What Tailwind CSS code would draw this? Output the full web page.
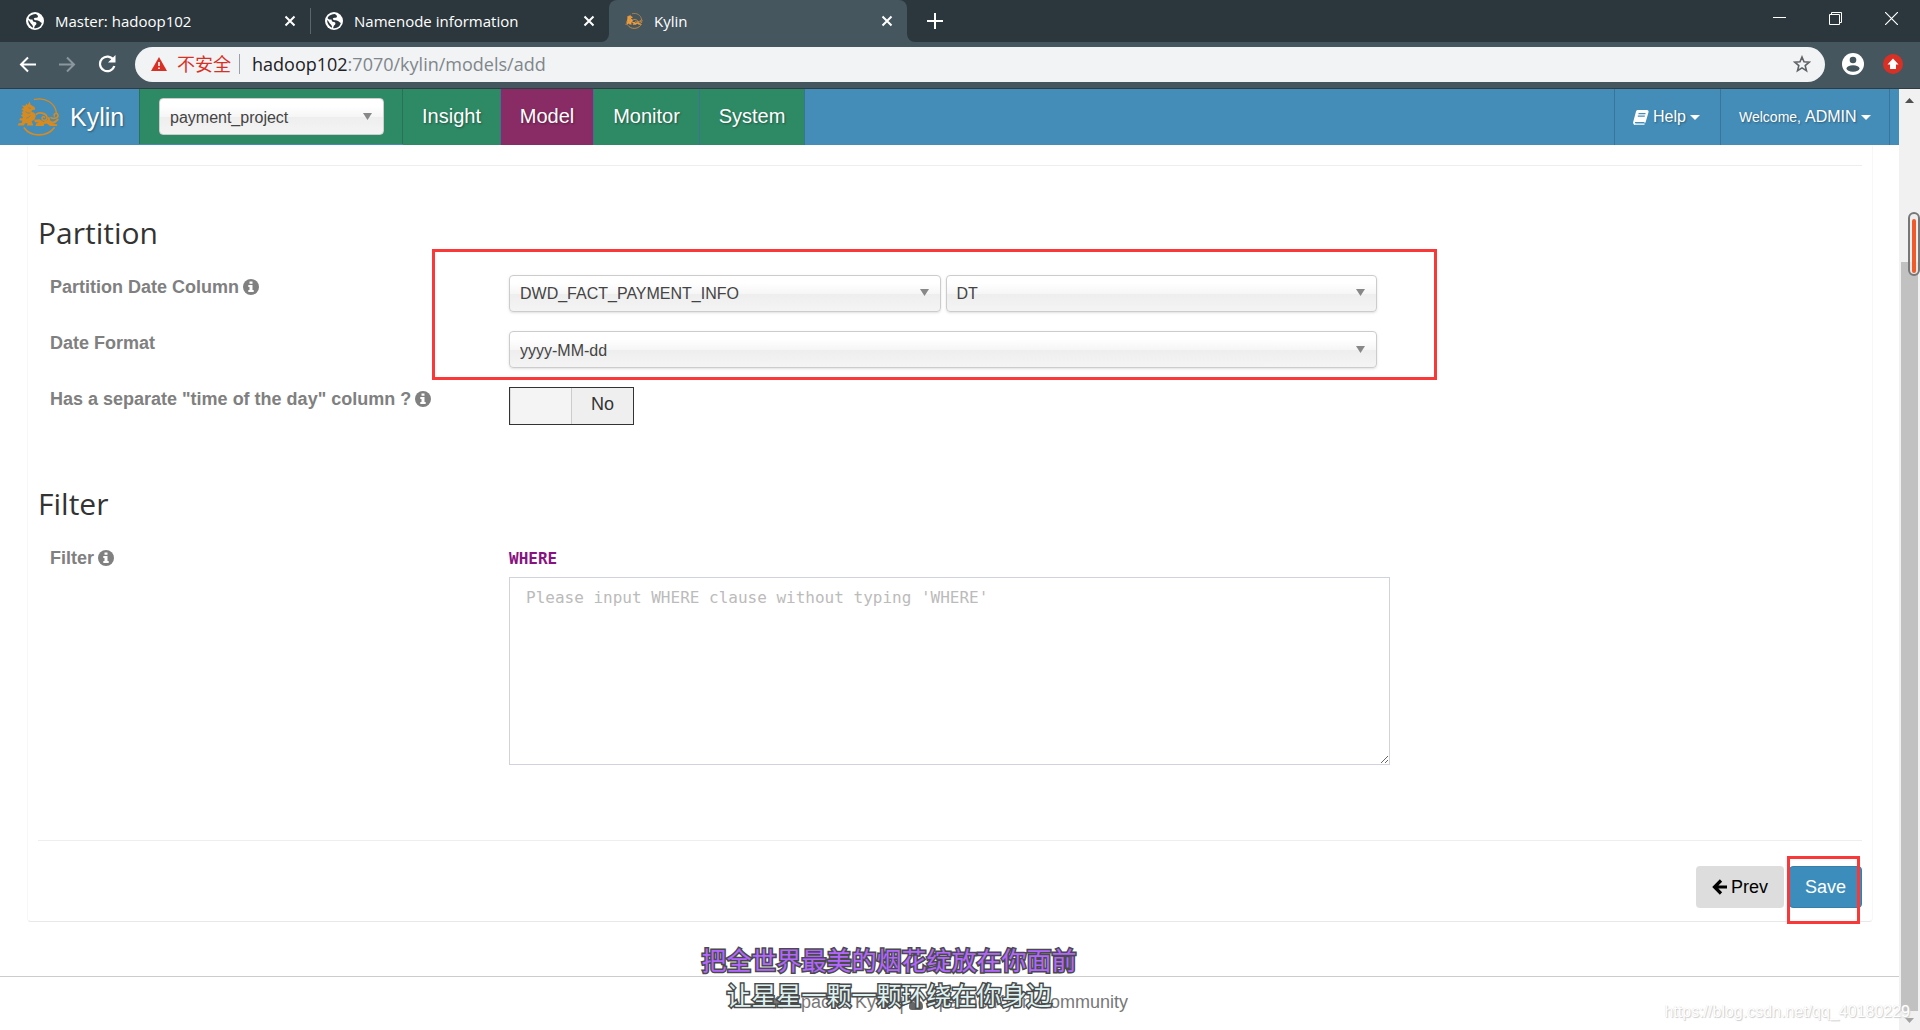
<!DOCTYPE html>
<html lang="en">
<head>
<meta charset="utf-8">
<title>Kylin</title>
<script src="https://cdn.jsdelivr.net/npm/@tailwindcss/browser@4"></script>
</head>
<body class="flex min-h-screen flex-col bg-white font-['Liberation_Sans',sans-serif] text-[#333]">
<svg class="hidden" aria-hidden="true">
  <symbol id="globe" viewBox="0 0 18 18"><circle cx="9" cy="9" r="9" fill="#fff"/><path fill="#2c373d" d="M10 2c-3 0-6 1-7.500 4 1 1.600 2.500 1.700 4 1.500.2 1.700.8 2.500 2.500 2.500 1.200 0 1.700 1 1.300 2.200-.4 1-1.500 1-1.700 2.300-.1.900-.3 1.200-.8 1.500 4.200.9 7.200-1.600 8-5-1.200-.3-1.700-1.300-2.800-1.900-1.600-.8-3.300-.6-4.600-1.300-.8-.5-.7-1.500.1-1.800 1.300-.4 2.800.2 3.400-1 .5-1.200-.8-2.200-1.900-3z"/><path fill="#2c373d" d="M2 8c.2 3.800 2.300 6.500 5 7.700.3-1.700-.6-2.600-1.700-3.800C4.200 10.700 3.500 9 2 8z"/></symbol>
  <symbol id="close" viewBox="0 0 12 12"><path d="M1.500 1.500l9 9M10.500 1.500l-9 9" stroke="#fff" stroke-width="2" fill="none"/></symbol>
  <symbol id="kylin" viewBox="50 80 130 120">
    <g fill="none" stroke="currentColor" stroke-linecap="round">
      <path d="M103 87C135 79 165 98 169 126" stroke-width="4"/>
      <path d="M72 173C92 201 140 201 162 173" stroke-width="5"/>
      <path d="M153 142C160 146 176 144 174 134C171 126 160 129 163 137" stroke-width="5"/>
      <path d="M146 143C146 160 164 160 173 148" stroke-width="6"/>
      <path d="M108 132C116 124 136 128 140 138C144 150 130 154 126 146C124 140 130 137 133 141" stroke-width="5"/>
    </g>
    <path fill="currentColor" d="M88 93L91 103L103 110L105 118L97 119L93 123L103 128L107 137L103 148L94 153L97 160L99 166H80L82 159L76 158L70 166H52L55 159L64 158L66 151L57 150L59 144L68 144L66 138L61 136L68 131L63 125L70 122L63 116L71 113L64 105L75 106L79 99L82 104Z"/>
    <path fill="currentColor" d="M102 148L118 147L130 154L144 148L154 157L161 160L172 163L171 167H150L140 160L132 161L131 167H106L108 160L116 157L104 156Z"/>
    <path stroke="#448db8" stroke-width="2" fill="none" d="M84 112l8 2M76 124q6 6 14 4M78 144q8-2 12-8"/>
  </symbol>
  <symbol id="info" viewBox="0 0 16 16"><circle cx="8" cy="8" r="8" fill="#808080"/><path fill="#fff" d="M6.500 2.500h3v2.300h-3zM5.300 6h4.200v5h1.200v2H5.300v-2h1.200V8H5.300z"/></symbol>
  <symbol id="tri" viewBox="0 0 9 7"><path fill="#888" d="M0 0h9L4.500 7z"/></symbol>
</svg>

<!-- Browser tabs -->
<header class="shrink-0 bg-[#2c373d] font-['Open_Sans','Noto_Sans_CJK_SC',sans-serif] text-white">
  <div class="flex h-[42px] items-stretch">
    <div class="flex w-[310px] items-center pr-[14px] pl-[26px] text-[15px]"><svg class="mr-[11px] size-[18px]"><use href="#globe"/></svg><span class="flex-1">Master: hadoop102</span><button aria-label="Close tab"><svg class="size-3"><use href="#close"/></svg></button></div>
    <div class="my-2 w-px bg-[#5b666c]"></div>
    <div class="flex w-[298px] items-center pr-[14px] pl-[14px] text-[15px]"><svg class="mr-[11px] size-[18px]"><use href="#globe"/></svg><span class="flex-1 whitespace-nowrap">Namenode information</span><button aria-label="Close tab"><svg class="size-3"><use href="#close"/></svg></button></div>
    <div class="relative flex w-[298px] items-center rounded-t-lg bg-[#45565f] pr-[14px] pl-4 text-[15px]">
      <svg class="absolute bottom-0 -left-2 size-2" viewBox="0 0 8 8"><path fill="#45565f" d="M8 0v8H0a8 8 0 0 0 8-8z"/></svg>
      <svg class="absolute -right-2 bottom-0 size-2" viewBox="0 0 8 8"><path fill="#45565f" d="M0 0v8h8a8 8 0 0 1-8-8z"/></svg>
      <svg class="mr-[11px] size-[18px] text-[#f09c3a]"><use href="#kylin"/></svg><span class="flex-1">Kylin</span><button aria-label="Close tab"><svg class="size-3"><use href="#close"/></svg></button></div>
    <button aria-label="New tab" class="ml-5 self-center"><svg class="size-4" viewBox="0 0 16 16"><path d="M8 0v16M0 8h16" stroke="#fff" stroke-width="2"/></svg></button>
    <div class="ml-auto flex items-start gap-[43px] pt-3 pr-[22px]">
      <button aria-label="Minimize"><svg class="size-[13px]" viewBox="0 0 13 13"><path d="M0 5.500h13" stroke="#fff"/></svg></button>
      <button aria-label="Restore"><svg class="size-[13px]" viewBox="0 0 13 13"><path d="M.5 2.500h10v10H.5zM2.500 2.500v-2h10v10h-2" fill="none" stroke="#fff"/></svg></button>
      <button aria-label="Close window"><svg class="size-[13px]" viewBox="0 0 13 13"><path d="M0 0l13 13M13 0L0 13" stroke="#fff" stroke-width="1.200"/></svg></button>
    </div>
  </div>
  <!-- Address bar -->
  <div class="flex h-[47px] items-center border-b border-[#303c42] bg-[#45565f] pr-[17px] pb-[2px] pl-[19px]">
    <button aria-label="Back"><svg class="size-[17px]" viewBox="0 0 17 17"><path d="M17 8.500H2M9 1.500l-7 7 7 7" fill="none" stroke="#fff" stroke-width="2"/></svg></button>
    <button aria-label="Forward" class="ml-[23px]"><svg class="size-[17px]" viewBox="0 0 17 17"><path d="M0 8.500h15M8 1.500l7 7-7 7" fill="none" stroke="#8b979d" stroke-width="2"/></svg></button>
    <button aria-label="Reload" class="ml-[22px]"><svg class="size-[18px]" viewBox="0 0 18 18"><path d="M15.500 5A7.300 7.300 0 1 0 16.300 11" fill="none" stroke="#fff" stroke-width="2.200"/><path d="M17.500 0v7.500H10z" fill="#fff"/></svg></button>
    <div class="ml-[19px] flex h-[35px] flex-1 items-center rounded-full bg-[#f1f3f4] px-4 text-lg">
      <svg class="h-[14px] w-4" viewBox="0 0 16 14"><path fill="#d93025" d="M8 0l8 14H0z"/><path stroke="#fff" stroke-width="1.600" d="M8 5v4M8 10.500v1.600"/></svg>
      <span class="ml-[10px] text-[#d93025]">不安全</span>
      <span class="mx-2 h-5 w-px bg-[#9aa0a6]"></span>
      <a href="#" aria-label="Address" class="ml-1 text-[#202124]">hadoop102<span class="text-[#80868b]">:7070/kylin/models/add</span></a>
      <button aria-label="Bookmark" class="ml-auto"><svg class="-mr-[2px] size-[18px]" viewBox="0 0 18 18"><path d="M9 2l2 4.800 5.200.4-4 3.400 1.300 5.100L9 12.900l-4.500 2.800 1.300-5.100-4-3.400 5.200-.4z" fill="none" stroke="#5f6368" stroke-width="1.600"/></svg></button>
    </div>
    <button aria-label="Profile" class="ml-[17px]"><svg class="size-[22px]" viewBox="0 0 22 22"><circle cx="11" cy="11" r="11" fill="#fff"/><circle cx="11" cy="7" r="3.300" fill="#45565f"/><ellipse cx="11" cy="15.500" rx="6.500" ry="3.200" fill="#45565f"/></svg></button>
    <button aria-label="Update browser" class="ml-[19px]"><svg class="size-5" viewBox="0 0 20 20"><circle cx="10" cy="10" r="10" fill="#d93025"/><path fill="#fff" d="M10 4.500l5.500 6H13V15H7v-4.500H4.500z"/></svg></button>
  </div>
</header>

<div class="flex flex-1">
  <div class="relative flex min-w-0 flex-1 flex-col">
    <!-- Navigation -->
    <nav class="flex h-14 shrink-0 bg-[#448db8] text-xl text-white [text-shadow:1px_1px_2px_rgba(0,0,0,.35)]">
      <a href="#" class="flex w-[139px] items-center pl-[17px] text-[25px]"><svg class="mr-[10px] h-10 w-[43px] text-[#d58a22]"><use href="#kylin"/></svg>Kylin</a>
      <div class="mb-px flex w-[264px] items-center border-x border-[#27735a] bg-[#2e8965] pl-[19px]">
        <div class="relative w-[225px]">
          <select aria-label="Project" class="h-[37px] w-full appearance-none rounded border border-[#ccc] bg-[linear-gradient(#fff_20%,#f6f6f6_50%,#eee_52%,#f4f4f4_100%)] pt-[2px] pl-[10px] text-base text-[#444]"><option>payment_project</option></select>
          <svg class="pointer-events-none absolute top-[15px] right-3 h-[7px] w-[9px]"><use href="#tri"/></svg>
        </div>
      </div>
      <a href="#" class="flex w-[98px] items-center justify-center border-r border-[#3a7396] bg-[#2e8965] pb-[2px]">Insight</a>
      <a href="#" class="flex w-[93px] items-center justify-center border-r border-[#3a7396] bg-[#892b64] pb-[2px]">Model</a>
      <a href="#" class="flex w-[106px] items-center justify-center border-r border-[#3a7396] bg-[#2e8965] pb-[2px]">Monitor</a>
      <a href="#" class="flex w-[105px] items-center justify-center border-r border-[#3a7396] bg-[#2e8965] pb-[2px]">System</a>
      <a href="#" class="ml-auto flex w-[106px] items-center border-l border-[#38759a] pl-[18px] text-base"><svg class="mr-1 h-[15px] w-4" viewBox="0 0 16 15"><path fill="#fff" d="M4.500 0H14q2 .3 1.500 2.200L12.700 12q-.5 1.500-2 1.500H3q-1.200 0-1 .8H11L12 15H1.500Q-.3 14 .2 12L3 1.500Q3.300.2 4.500 0z"/><path stroke="#448db8" stroke-width="1.200" d="M5.500 3.700h7M4.800 6.200h7M2 12.500h9.500"/></svg>Help<svg class="ml-1 h-[5px] w-[10px]" viewBox="0 0 10 5"><path fill="#fff" d="M0 0h10L5 5z"/></svg></a>
      <a href="#" class="mr-[9px] flex w-[170px] items-center border-x border-[#38759a] pl-[18px] text-base whitespace-nowrap"><span class="mr-1 text-sm">Welcome,</span>ADMIN<svg class="ml-1 h-[5px] w-[10px]" viewBox="0 0 10 5"><path fill="#fff" d="M0 0h10L5 5z"/></svg></a>
    </nav>

    <!-- Model form -->
    <main class="mr-[26px] ml-[27px] rounded-b border border-t-0 border-x-[#f7f7f7] border-b-[#e8e8e8] px-[10px] pt-5 pb-[13px]">
      <hr class="border-[#eee]">
      <h2 class="mt-[46px] font-['Open_Sans',sans-serif] text-3xl leading-[42px]">Partition</h2>
      <div class="relative mt-[21px] grid grid-cols-[459fr_868fr_485fr] gap-y-[19px] pl-3 text-[#444]">
        <label for="dateTable" class="flex h-6 items-center gap-1 text-lg font-bold text-[#808080]">Partition Date Column <svg class="size-4"><use href="#info"/></svg></label>
        <div class="grid grid-cols-2 gap-[5px]">
          <div class="relative">
            <select id="dateTable" class="h-[37px] w-full appearance-none rounded border border-[#ccc] bg-[linear-gradient(#fff_20%,#f6f6f6_50%,#eee_52%,#f4f4f4_100%)] pl-[10px] text-base shadow-sm"><option>DWD_FACT_PAYMENT_INFO</option></select>
            <svg class="pointer-events-none absolute top-[14px] right-3 h-[7px] w-[9px]"><use href="#tri"/></svg>
          </div>
          <div class="relative">
            <select aria-label="Partition date column name" class="h-[37px] w-full appearance-none rounded border border-[#ccc] bg-[linear-gradient(#fff_20%,#f6f6f6_50%,#eee_52%,#f4f4f4_100%)] pl-[10px] text-base shadow-sm"><option>DT</option></select>
            <svg class="pointer-events-none absolute top-[14px] right-3 h-[7px] w-[9px]"><use href="#tri"/></svg>
          </div>
        </div>
        <label for="dateFormat" class="col-start-1 flex h-6 items-center text-lg font-bold text-[#808080]">Date Format</label>
        <div class="relative">
          <select id="dateFormat" class="h-[37px] w-full appearance-none rounded border border-[#ccc] bg-[linear-gradient(#fff_20%,#f6f6f6_50%,#eee_52%,#f4f4f4_100%)] pt-[2px] pl-[10px] text-base shadow-sm"><option>yyyy-MM-dd</option></select>
          <svg class="pointer-events-none absolute top-[15px] right-3 h-[7px] w-[9px]"><use href="#tri"/></svg>
        </div>
        <label for="timeColumn" class="col-start-1 flex h-6 items-center gap-1 text-lg font-bold whitespace-nowrap text-[#808080]">Has a separate "time of the day" column ? <svg class="size-4"><use href="#info"/></svg></label>
        <label class="relative flex h-[38px] w-[125px] border border-[#333] bg-[#f4f4f4] text-lg text-[#333]">
          <input id="timeColumn" type="checkbox" class="absolute inset-0 appearance-none">
          <span class="w-[61px] border-l border-[#ddd]"></span><span class="flex flex-1 items-center justify-center border-l border-[#ccc] bg-[#efefef] pb-1">No</span>
        </label>
        <div class="pointer-events-none absolute -top-[26px] -right-[60px] -bottom-3 -left-[77px] col-start-2 col-end-3 row-start-1 row-end-3 border-3 border-[#fb3838]"></div>
      </div>

      <h2 class="mt-[58px] font-['Open_Sans',sans-serif] text-3xl leading-[42px]">Filter</h2>
      <div class="mt-[21px] grid grid-cols-[459fr_881fr_472fr] pl-3">
        <label for="filter" class="flex h-6 items-center gap-1 text-lg font-bold text-[#808080]">Filter <svg class="size-4"><use href="#info"/></svg></label>
        <div class="font-['DejaVu_Sans_Mono',monospace] text-base">
          <p class="mb-[5px] leading-[26px] font-bold text-[#881280]">WHERE</p>
          <textarea id="filter" class="block h-[188px] w-full resize border border-[#d0d2dd] px-4 py-2 leading-6 placeholder:text-[#bbb]" placeholder="Please input WHERE clause without typing 'WHERE'"></textarea>
        </div>
      </div>

      <hr class="mt-[75px] border-[#eee]">
      <div class="mt-[25px] flex justify-end gap-[5px] text-lg">
        <button class="flex h-[42px] w-[88px] items-center justify-center gap-1 rounded bg-[#ddd] text-black"><svg class="h-4 w-[15px]" viewBox="0 0 15 16"><path d="M15 8H3M9 1.500L2.500 8 9 14.500" fill="none" stroke="#000" stroke-width="3.200"/></svg>Prev</button>
        <div class="relative">
          <button class="h-[42px] w-[73px] rounded border border-[#367fa9] bg-[#3c8dbc] text-white">Save</button>
          <div class="pointer-events-none absolute -top-[10px] right-[2px] -bottom-4 -left-[2px] border-3 border-[#fb3838]"></div>
        </div>
      </div>
    </main>

    <!-- Footer with lyric overlay -->
    <footer class="relative mt-[54px] flex-1 border-t border-[#ccc] pt-[13px] text-center text-lg leading-6 text-[#777]">
      <a href="#" class="inline-flex items-center gap-1"><svg class="h-4 w-[14px]" viewBox="0 0 18 16"><path fill="#777" d="M9 0l9 8h-2.500v8H11v-5H7v5H2.500V8H0z"/></svg>Apache Kylin</a> |
      <a href="#" class="inline-flex items-center gap-1"><svg class="h-4 w-[14px]" viewBox="0 0 14 16"><circle cx="7" cy="4" r="4" fill="#666"/><path fill="#666" d="M3 7q4 3 8 0 3 1 3 6 0 3-3 3H3q-3 0-3-3 0-5 3-6z"/></svg>Apache Kylin Community</a>
      <div class="pointer-events-none absolute inset-x-0 -top-[35px] pr-[121px] font-['Noto_Sans_CJK_SC',sans-serif] text-[25px] leading-[35px] whitespace-nowrap [-webkit-text-stroke:3px_#4a4a4a] [paint-order:stroke_fill]">
        <p class="text-[#b266ff]">把全世界最美的烟花绽放在你面前</p>
        <p class="text-[#dff2f2]">让星星一颗一颗环绕在你身边</p>
      </div>
    </footer>
  </div>

  <!-- Page scrollbar -->
  <div class="relative flex w-[21px] shrink-0 flex-col items-center bg-[#f1f1f1]">
    <svg class="mt-[9px] h-[5px] w-[9px]" viewBox="0 0 9 5"><path fill="#505050" d="M4.500 0L9 5H0z"/></svg>
    <div class="mt-[159px] w-[17px] flex-1 bg-[#c1c1c1]"></div>
    <svg class="mt-[7px] mb-[7px] h-[5px] w-[9px]" viewBox="0 0 9 5"><path fill="#a3a3a3" d="M0 0h9L4.500 5z"/></svg>
    <div class="absolute top-[123px] right-0 h-16 w-3 rounded-full border-2 border-[#777] bg-[#eee]/80 px-[2px] pt-[5px] pb-px"><div class="h-full rounded bg-[#f05a28]"></div></div>
    <p class="pointer-events-none absolute right-[10px] bottom-[8px] text-base leading-5 whitespace-nowrap text-white [text-shadow:1px_1px_1px_#ccc,0_0_1px_#ddd]">https://blog.csdn.net/qq_40180229</p>
  </div>
</div>
</body>
</html>
